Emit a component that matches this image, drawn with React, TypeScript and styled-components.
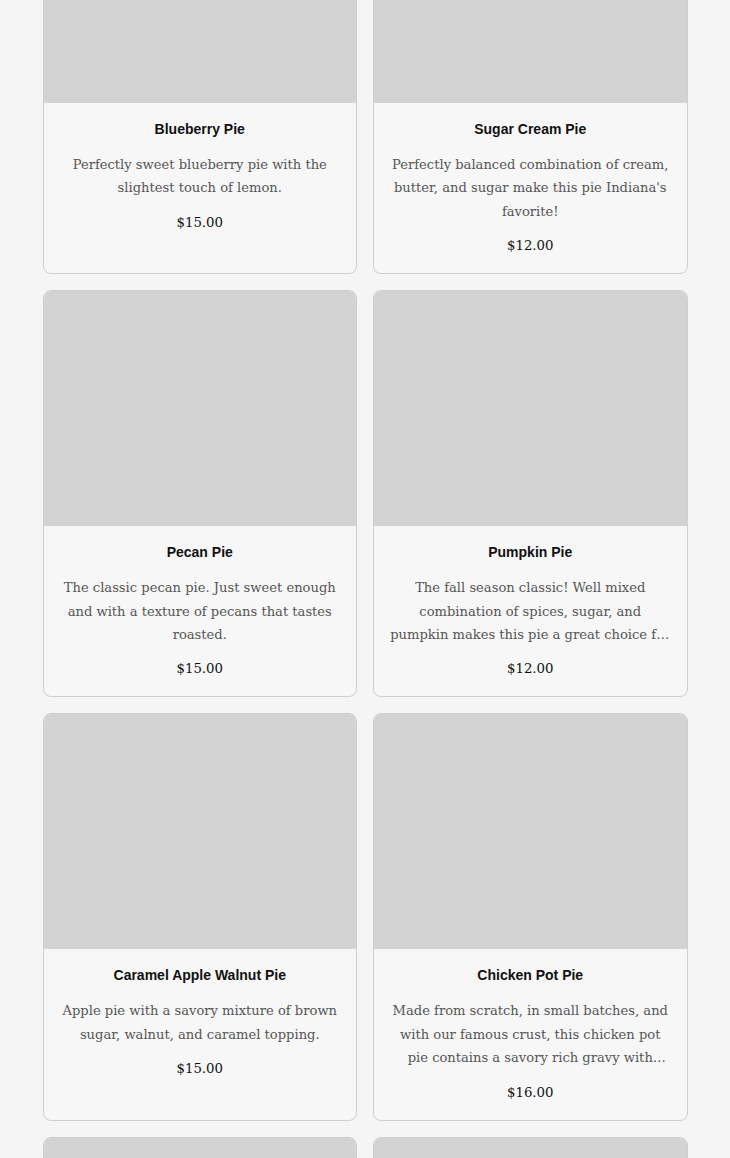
import React from "react";
import styled, { createGlobalStyle } from "styled-components";

const Global = createGlobalStyle`
  html, body { margin: 0; padding: 0; background: #f5f5f5; overflow: hidden; }
  body { font-family: "Liberation Serif", serif; }
`;

const Page = styled.main`
  width: 645px;
  margin: -133px auto 0;
`;

const Grid = styled.div`
  display: grid;
  grid-template-columns: 1fr 1fr;
  column-gap: 16px;
  row-gap: 16px;
`;

const Card = styled.article`
  display: flex;
  flex-direction: column;
  background: #f7f7f7;
  border: 1px solid #cfcfcf;
  border-radius: 8px;
  overflow: hidden;
`;

const Photo = styled.div`
  height: 235px;
  background: #d4d3d4;
`;

const Body = styled.div`
  display: flex;
  flex-direction: column;
  align-items: center;
  text-align: center;
  padding: 18px 16px 17px;
`;

const Title = styled.h3`
  margin: 0;
  font-family: "Liberation Sans", Arial, sans-serif;
  font-weight: 700;
  font-size: 14px;
  line-height: 17px;
  color: #111;
`;

const Desc = styled.p`
  margin: 15px 0 0;
  font-family: "DejaVu Serif", serif;
  font-size: 13.1px;
  line-height: 23.4px;
  color: #555;
  display: -webkit-box;
  -webkit-line-clamp: 3;
  -webkit-box-orient: vertical;
  overflow: hidden;
`;

const Price = styled.div`
  margin-top: 13px;
  font-family: "DejaVu Serif", serif;
  font-size: 13.3px;
  line-height: 20px;
  color: #111;
`;

const pies = [
  { name: "Blueberry Pie", desc: "Perfectly sweet blueberry pie with the slightest touch of lemon.", price: "$15.00" },
  { name: "Sugar Cream Pie", desc: "Perfectly balanced combination of cream, butter, and sugar make this pie Indiana's favorite!", price: "$12.00" },
  { name: "Pecan Pie", desc: "The classic pecan pie. Just sweet enough and with a texture of pecans that tastes roasted.", price: "$15.00" },
  { name: "Pumpkin Pie", desc: "The fall season classic! Well mixed combination of spices, sugar, and pumpkin makes this pie a great choice for any holiday gathering.", price: "$12.00" },
  { name: "Caramel Apple Walnut Pie", desc: "Apple pie with a savory mixture of brown sugar, walnut, and caramel topping.", price: "$15.00" },
  { name: "Chicken Pot Pie", desc: "Made from scratch, in small batches, and with our famous crust, this chicken pot pie contains a savory rich gravy with chicken and vegetables.", price: "$16.00" },
  { name: "Cherry Pie", desc: "Tart cherries baked in our flaky, buttery crust.", price: "$15.00" },
  { name: "Apple Pie", desc: "Classic apple pie with cinnamon and a golden lattice crust.", price: "$14.00" },
];

export default function App() {
  return (
    <>
      <Global />
      <Page>
        <Grid>
          {pies.map((p) => (
            <Card key={p.name}>
              <Photo />
              <Body>
                <Title>{p.name}</Title>
                <Desc>{p.desc}</Desc>
                <Price>{p.price}</Price>
              </Body>
            </Card>
          ))}
        </Grid>
      </Page>
    </>
  );
}
